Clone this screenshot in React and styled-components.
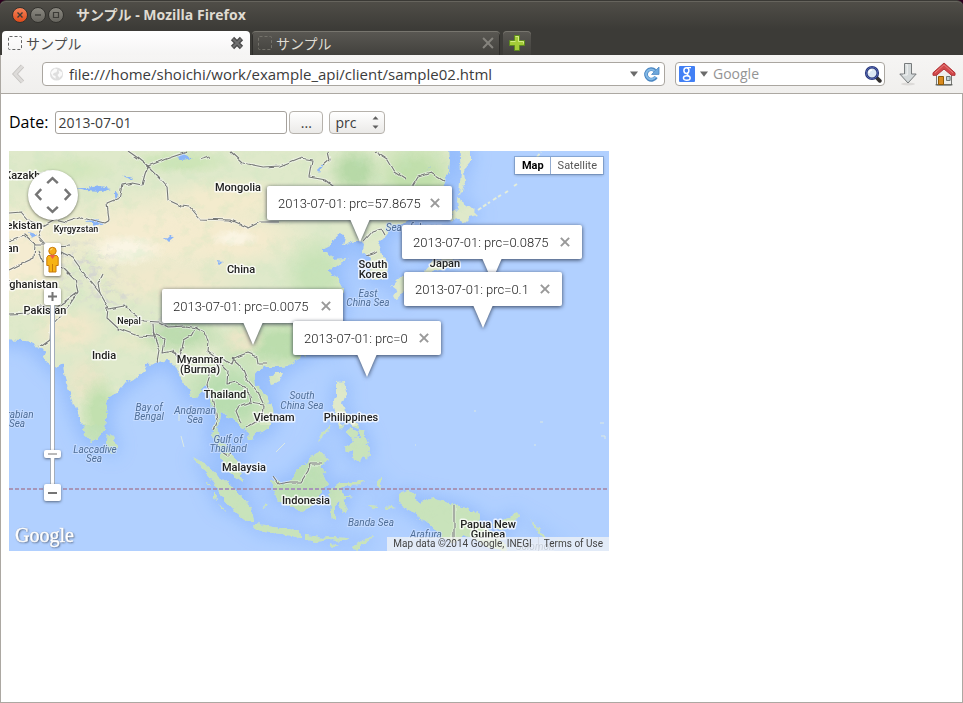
import React from "react";
import styled, { createGlobalStyle, css } from "styled-components";

const uiFont = `"Open Sans", "Noto Sans", "Noto Sans CJK JP", sans-serif`;

const GlobalStyle = createGlobalStyle`
  * { box-sizing: border-box; }
  body { margin: 0; background: #fff; font-family: ${uiFont}; color: #3c3c3c; }
  button, input, select { font: inherit; color: inherit; margin: 0; }
  svg { display: block; }
`;

const Window = styled.div`
  min-height: 100vh;
  display: flex;
  flex-direction: column;
  background: #2c001e;
`;

const Chrome = styled.header`
  background: linear-gradient(#504e48, #3c3b37 28px);
  border-top: 1px solid #3a3935;
  box-shadow: inset 0 1px #66645d;
  border-radius: 6px 6px 0 0;
`;

const TitleBar = styled.div`
  height: 30px;
  padding: 0 12px 3px;
  display: flex;
  align-items: center;
  gap: 2px;
`;

const WindowButton = styled.button`
  width: 16px;
  height: 16px;
  padding: 0;
  border: 1px solid #33322e;
  border-radius: 50%;
  background: ${(p) => (p.$close ? "linear-gradient(#f58359, #df4b1b)" : "linear-gradient(#8a8880, #66645e)")};
  svg { width: 14px; height: 14px; }
`;

const Title = styled.h1`
  margin: 0 0 0 10px;
  font-size: 14px;
  line-height: 20px;
  font-weight: 700;
  color: #dfdbd2;
  white-space: nowrap;
`;

const TabStrip = styled.div`
  display: flex;
  gap: 2px;
  padding: 0 2px;
  height: 24px;
`;

const Tab = styled.div`
  flex: 0 1 248px;
  min-width: 0;
  display: flex;
  align-items: center;
  gap: 3px;
  padding: 0 6px;
  border-radius: 4px 4px 0 0;
  font-size: 14px;
  ${(p) =>
    p.$active
      ? css`background: linear-gradient(#fff, #f5f4f3); color: #4c4c4c;`
      : css`
          background: linear-gradient(#5a5853, #42413d);
          color: #dfdbd2;
          box-shadow: inset 0 1px #77756e, inset 1px 0 #2e2d2a, inset -1px 0 #2e2d2a;
        `}
`;

const TabLabel = styled.span`
  flex: 1;
  line-height: 20px;
  font-family: "Noto Sans CJK JP", sans-serif;
`;

const PlainButton = styled.button`
  display: flex;
  align-items: center;
  justify-content: center;
  padding: 0;
  border: 0;
  background: none;
`;

const NewTab = styled(PlainButton)`
  width: 28px;
  margin-left: 1px;
  border-radius: 4px 4px 0 0;
  background: linear-gradient(#5a5853, #42413d);
  box-shadow: inset 0 1px #77756e;
`;

const Toolbar = styled.div`
  height: 39px;
  display: flex;
  align-items: center;
  padding: 0 7px 0 10px;
  background: linear-gradient(#f6f5f4, #f0efed);
  border-bottom: 1px solid #aca8a2;
  border-left: 1px solid #aca8a2;
`;

const Field = styled.div`
  height: 24px;
  display: flex;
  align-items: center;
  gap: 5px;
  padding: 0 4px 0 6px;
  background: #fff;
  border: 1px solid #aaa6a0;
  border-radius: 4px;
  min-width: 0;
`;

const AddressField = styled(Field)`
  flex: 1;
  margin: 0 10px 0 16px;
`;

const SearchField = styled(Field)`
  flex: 0 1 210px;
  padding: 0 2px 0 3px;
`;

const FieldInput = styled.input`
  flex: 1;
  min-width: 0;
  width: 0;
  padding: 0;
  border: 0;
  outline: 0;
  background: none;
  font-size: ${(p) => (p.$large ? 15 : 14)}px;
  line-height: 20px;
  &::placeholder { color: #949494; opacity: 1; }
`;

const ToolButton = styled(PlainButton)`
  width: 24px;
  height: 28px;
  margin-left: ${(p) => p.$gap || 0}px;
`;

const Page = styled.main`
  flex: 1;
  padding: 17px 8px 8px;
  border: solid #aca8a2;
  border-width: 0 1px 1px;
  background: #fff;
`;

const Form = styled.form`
  display: flex;
  align-items: center;
  margin-bottom: 17px;
  font-size: 14px;
`;

const DateLabel = styled.label`
  color: #000;
  font-size: 16px;
  line-height: 23px;
  margin-right: 7px;
`;

const DateInput = styled.input`
  flex: 0 1 232px;
  min-width: 0;
  height: 23px;
  padding: 0 2px;
  border: 1px solid #a5a19c;
  border-radius: 3px;
  font-size: 14px;
`;

const raised = css`
  height: 23px;
  border: 1px solid #b6b2ac;
  border-radius: 4px;
  background: linear-gradient(#fff, #ebeae8);
`;

const PickButton = styled.button`
  ${raised}
  width: 34px;
  margin: 0 6px 0 2px;
  padding: 0;
`;

const SelectBox = styled.div`
  display: grid;
  align-items: center;
  > * { grid-area: 1 / 1; }
  > svg { justify-self: end; margin-right: 6px; pointer-events: none; }
`;

const Select = styled.select`
  ${raised}
  appearance: none;
  width: 56px;
  padding: 0 0 0 5px;
`;

const MapFrame = styled.section`
  position: relative;
  max-width: 600px;
  height: 400px;
  overflow: hidden;
  background: #b1d0ff;
  font-family: Roboto, sans-serif;
`;

const MapPicture = styled.svg`
  width: 600px;
  height: 400px;
`;

const Place = styled.text`
  font: 500 11px/12px Roboto, sans-serif;
  font-size: ${(p) => (p.$small ? 9 : 11)}px;
  fill: #222;
  stroke: rgba(255, 255, 255, 0.75);
  stroke-width: 3px;
  stroke-linejoin: round;
  paint-order: stroke;
  text-anchor: middle;
`;

const Sea = styled.text`
  font: italic 400 10px/11px Roboto, sans-serif;
  fill: #4f6e98;
  stroke: rgba(205, 224, 255, 0.7);
  stroke-width: 2px;
  paint-order: stroke;
  text-anchor: middle;
`;

const Bubble = styled.div`
  position: absolute;
  left: ${(p) => p.$x}px;
  top: ${(p) => p.$y}px;
  width: ${(p) => p.$w}px;
  height: 34px;
  display: flex;
  align-items: center;
  justify-content: space-between;
  padding: 0 12px 0 11px;
  background: #fff;
  border-radius: 2px;
  color: #222;
  font-size: 13px;
  font-weight: 300;
  white-space: nowrap;
  filter: drop-shadow(0 1px 2px rgba(20, 30, 50, 0.8));
  &::after {
    content: "";
    position: absolute;
    top: 33px;
    left: calc(50% - 10px);
    border: solid transparent;
    border-width: 23px 10px 0;
    border-top-color: #fff;
  }
`;

const Control = styled.div`
  position: absolute;
  left: ${(p) => p.$x}px;
  top: ${(p) => p.$y}px;
`;

const controlShadow = css`
  background: #fff;
  box-shadow: 0 1px 3px rgba(0, 0, 0, 0.5);
`;

const PanPad = styled.div`
  ${controlShadow}
  width: 50px;
  height: 50px;
  padding: 3px;
  border-radius: 50%;
  display: grid;
  grid-template: repeat(3, 1fr) / repeat(3, 1fr);
`;

const PanButton = styled(PlainButton)`
  grid-area: ${(p) => p.$area};
  svg { transform: rotate(${(p) => p.$turn}deg); }
`;

const ZoomStack = styled.div`
  width: 17px;
  display: flex;
  flex-direction: column;
  align-items: center;
`;

const SmallButton = styled(PlainButton)`
  ${controlShadow}
  width: 17px;
  height: ${(p) => p.$h || 17}px;
  border-radius: 2px;
`;

const Track = styled.div`
  height: ${(p) => p.$h}px;
  width: 5px;
  background: #fff;
  border: solid #a3adbb;
  border-width: 0 1px;
`;

const TypeSwitch = styled.div`
  position: absolute;
  top: 6px;
  right: 6px;
  height: 17px;
  display: flex;
  background: #fff;
  box-shadow: 0 0 0 1px rgba(70, 105, 155, 0.35), 0 1px 3px rgba(0, 0, 0, 0.3);
`;

const TypeButton = styled.button`
  padding: 0 6px 0 7px;
  border: 0;
  background: none;
  font-size: 11px;
  line-height: 18px;
  font-weight: ${(p) => (p.$on ? 700 : 400)};
  color: ${(p) => (p.$on ? "#000" : "#565656")};
  & + & { border-left: 1px solid #93acd0; }
`;

const Brand = styled.div`
  position: absolute;
  left: 6px;
  bottom: 4px;
  font-family: "Liberation Serif", serif;
  font-size: 20px;
  line-height: 24px;
  color: #fff;
  -webkit-text-stroke: 0.5px #fff;
  text-shadow: 1px 1px 2px #45536b, 0 0 1px #56657c;
`;

const Credits = styled.footer`
  position: absolute;
  right: 0;
  bottom: 0;
  height: 14px;
  display: flex;
  background: rgba(245, 245, 245, 0.72);
  font-size: 10px;
  line-height: 14px;
  color: #444;
  span, a { padding: 0 6px; color: inherit; text-decoration: none; }
  a { border-left: 1px solid #d5dbe6; padding-left: 5px; }
`;

const Cross = ({ size = 9, color = "#999", width = 1.8 }) => (
  <svg width={size} height={size} viewBox="0 0 9 9" stroke={color} strokeWidth={width} fill="none">
    <path d="M.8.8l7.4 7.4M8.2.8L.8 8.2" />
  </svg>
);

const HeavyCross = () => (
  <svg width="14" height="14" viewBox="0 0 14 14">
    <path d="M2.5 2.5l9 9M11.5 2.5l-9 9" stroke="#4b4b4b" strokeWidth="4.6" />
    <path d="M3 3l8 8M11 3l-8 8" stroke="#707070" strokeWidth="2" />
  </svg>
);

const Favicon = ({ color }) => (
  <svg width="15" height="16" viewBox="0 0 15 16">
    <rect x=".5" y="1.5" width="13" height="13" rx="1" fill="none" stroke={color} strokeDasharray="3 2" />
  </svg>
);

const Caret = () => (
  <svg width="8" height="6" viewBox="0 0 8 6"><path d="M0 .5h8L4 5.8z" fill="#6b6b6b" /></svg>
);

const Globe = () => (
  <svg width="15" height="16" viewBox="0 0 16 16">
    <circle cx="8" cy="8" r="7" fill="#dedede" />
    <path d="M3 5l3-3 3 1-1 3-3 1-1 2 3 1v3l-3-2-2-4zM10 4l4 2v3l-3 3-2-3 2-2z" fill="#fafafa" />
  </svg>
);

const Reload = () => (
  <svg width="17" height="17" viewBox="0 0 17 17" fill="none">
    <path d="M12 4.6A5.3 5.3 0 1 0 13 11" stroke="#4a86c2" strokeWidth="3.8" />
    <path d="M16 1v7.4H8.6z" fill="#6ea8dc" stroke="#4a86c2" strokeWidth=".8" />
    <path d="M11.6 4.9a4.9 4.9 0 1 0 .8 5.7" stroke="#83b9e6" strokeWidth="2" />
  </svg>
);

const GoogleBadge = () => (
  <svg width="16" height="16" viewBox="0 0 16 16">
    <rect width="16" height="16" rx="1" fill="#4280f5" />
    <g fill="none" stroke="#fff">
      <ellipse cx="7.4" cy="4.6" rx="2.5" ry="2.9" strokeWidth="1.5" />
      <path d="M8 1.7h4M9 7.3c-1.6 1.2-.4 1.5 1 2.3" strokeWidth="1.3" />
      <ellipse cx="7.8" cy="12" rx="3.4" ry="2.3" strokeWidth="1.4" />
    </g>
  </svg>
);

const Magnifier = () => (
  <svg width="18" height="18" viewBox="0 0 18 18">
    <path d="M12.5 12.5l3.3 3.3" stroke="#302e2e" strokeWidth="3.8" strokeLinecap="round" />
    <circle cx="8" cy="8" r="5.8" fill="#dce8f4" stroke="#263577" strokeWidth="2.6" />
    <circle cx="8" cy="8" r="5.8" fill="none" stroke="#6376c4" strokeWidth=".7" />
    <path d="M5 8a3 3 0 0 1 3-3" stroke="#fff" strokeWidth="1.6" fill="none" />
  </svg>
);

const Download = () => (
  <svg width="20" height="24" viewBox="0 0 20 24">
    <ellipse cx="10" cy="22" rx="7" ry="1.5" fill="#dcdad8" />
    <path d="M6.5 1.5h7V12h4.7L10 21 1.8 12h4.7z" fill="#d4d9da" stroke="#777b7c" strokeLinejoin="round" />
    <path d="M7.7 2.7h1.5V13H5" stroke="#f3f5f5" fill="none" />
  </svg>
);

const Home = () => (
  <svg width="24" height="24" viewBox="0 0 24 24">
    <path d="M4.5 11L12 4l7.5 7v12h-15z" fill="#eeeeec" stroke="#777974" />
    <path d="M3.5 22.8h17" stroke="#555753" />
    <path d="M6.5 14.5h5v8h-5z" fill="#d98a1d" stroke="#8f5902" />
    <path d="M14.5 14.5h3.6v4h-3.6z" fill="#c0d0d2" stroke="#6b7779" />
    <path d="M12 1L1 10.8v2.5h3.5L12 7l7.5 6.3H23v-2.5z" fill="#d2484a" stroke="#b03337" strokeLinejoin="round" />
    <path d="M3 10.8l9-8 9 8" fill="none" stroke="#e57e7c" />
  </svg>
);

const Chevron = () => (
  <svg width="13" height="9" viewBox="0 0 13 9">
    <path d="M1.2 7.2l5.3-5 5.3 5" fill="none" stroke="#757575" strokeWidth="2.5" />
  </svg>
);

const Pegman = () => (
  <svg width="13" height="28" viewBox="0 0 13 28">
    <path d="M2.2 9.5h8.6l1.4 2v8H10V26H3v-6.5H.8v-8z" fill="#f7b314" stroke="#c87a0a" />
    <path d="M6.5 18v8" stroke="#c87a0a" />
    <path d="M3.5 9h6l-3 4z" fill="#ee5d4c" />
    <circle cx="6.5" cy="5" r="3.7" fill="#f7ae17" stroke="#c87a0a" />
    <path d="M4.5 4.3a2 2 0 0 1 2-1.6" stroke="#ffe39b" fill="none" />
  </svg>
);

const MAINLAND =
  "M0 140H448L450 160 449 172 443 186 434 201 420 214 408 220 398 225 391 230 385 237 378 244 380 251 387 262 388 272 382 279 372 279 369 270 371 258 363 252 364 244 360 240 352 242 343 246 345 236 338 235 330 245 322 249 322 252 328 252 333 260 348 259 338 264 328 272 337 278 343 288 342 304 338 320 329 338 321 348 308 354 297 360 287 366 280 367 268 367 258 370 253 376 255 385 265 393 272 408 273 418 270 427 262 432 255 433 249 440 248 431 242 428 237 422 231 418 222 413 220 421 217 428 219 438 228 448 232 454 238 462 240 471 243 482 235 476 228 470 222 460 221 453 216 446 212 436 214 427 216 418 213 408 209 396 207 383 203 389 197 397 190 397 188 388 180 376 175 366 168 360 159 363 147 364 144 371 136 378 125 383 117 393 108 397 106 414 105 429 97 439 91 442 86 436 79 418 71 396 65 380 63 364 56 368 48 363 43 357 46 350 36 348 32 342 25 341 0 340Z";

const ISLANDS = [
  "M459 140L471 152 471 162 464 170 465 182 462 192 459 193 461 172 460 158Z",
  "M457 198L467 205 473 210 478 215 470 217 464 223 456 218 451 223 453 213 458 208Z",
  "M449 226L458 230 459 243 452 258 451 268 443 269 435 271 427 275 424 271 431 263 441 259 448 246Z",
  "M415 274L423 272 422 278 415 280Z",
  "M396 281L404 274 407 281 403 293 397 300 394 295 397 290 392 286Z",
  "M333 339L338 342 336 356 331 350Z",
  "M269 377L276 373 283 373 279 382 272 384Z",
  "M107 433L114 437 117 446 114 453 109 454 106 446Z",
  "M336 382L345 381 347 392 343 402 345 413 354 420 360 428 354 426 344 418 336 415 333 403 336 396Z",
  "M338 420L344 425 341 429ZM349 427L358 432 354 440 348 433ZM359 428L364 431 366 442 360 438ZM352 441L357 437 360 442 354 445ZM331 425L326 434 318 441 321 435Z",
  "M345 448L352 444 356 440 365 437 370 448 368 459 363 456 360 462 354 459 352 450 346 453Z",
  "M193 457L205 464 215 474 224 480 235 490 242 497 251 508 253 522 247 522 237 514 224 500 214 482 204 471Z",
  "M253 524L265 525 278 528 290 528 301 533 301 538 282 534 265 532 255 529Z",
  "M305 535L313 536 323 538 330 537 348 538 347 541 328 540 315 542 305 539Z",
  "M330 543L339 546 332 546ZM353 546L365 539 374 537 362 545 356 550Z",
  "M271 479L282 484 292 480 297 469 307 463 314 453 320 451 329 460 321 465 323 472 328 484 321 491 316 501 309 509 298 511 289 506 278 501 274 491Z",
  "M330 490L340 482 357 482 364 479 360 485 345 486 339 490 346 496 352 497 342 500 347 510 342 513 338 502 335 505 335 521 330 517 331 505Z",
  "M377 479L383 477 380 488 377 486ZM368 505L378 506 373 508ZM384 506L395 508 386 509Z",
  "M399 494L408 491 415 494 414 499 420 502 428 498 443 501 455 505 466 508 479 514 480 523 489 530 501 539 508 551 488 547 475 539 463 535 454 543 441 538 434 529 422 520 411 511 403 507 399 501Z",
  "M491 525L503 521 515 513 519 516 512 525 501 529ZM531 520L537 526 542 533 548 540 541 536ZM556 539L565 543 558 542Z",
  "M207 481L210 485 207 483ZM213 493L217 500 213 498ZM219 504L225 511 221 509ZM263 503L267 505 264 507Z",
];

const BORDERS = [
  "M128 151L138 158 148 166 145 174 142 185 132 183 122 185 119 198 107 203 109 220 104 223 82 217 67 222 55 219 43 226 38 236 46 245 58 247 70 246",
  "M148 166L160 178 167 186 168 200 181 206 190 207 200 219 230 220 248 228 260 222 279 222",
  "M148 166L166 159 187 152M200 160L210 157",
  "M230 151L243 163 263 167 280 166 300 158 312 160 309 177 326 180 340 190M359 206L382 203 408 194 418 177 431 173 444 181M328 152L330 160 324 165",
  "M374 151L388 160 395 172 406 179",
  "M9 213L22 212 30 221 41 225M9 241L25 235 35 244 34 258 21 264 9 270M34 244L49 244 57 250 73 258 86 276 100 293 109 309 125 306 132 313 144 321 158 322 168 327 185 326 196 328",
  "M9 314L29 313 42 306 53 309 67 300 78 292 75 280 62 267 52 264M78 292L70 304 61 315 51 326 50 340 39 348M100 293L98 284 103 274M38 250L42 262 55 259",
  "M108 308L107 318 119 329 138 336 154 337 153 325",
  "M153 331L160 350 158 362M154 334L165 339 163 352 174 350 180 365",
  "M196 327L191 336 184 340 180 356 172 352M196 327L205 332 208 341 207 351 216 358 220 365 210 374 207 385 212 397 215 410 217 420 213 430",
  "M220 365L224 358 232 364 234 358 247 353 257 357 258 363 268 363M232 358L241 366 246 378 257 391 263 403",
  "M226 384L237 382 248 389 250 403 239 407 236 412 241 424 M250 403L263 405 262 418 246 428M226 384L227 370 222 365",
  "M363 241L372 231 381 228 385 235M366 256L378 252",
  "M273 477L278 484 291 482 301 482 308 471 310 464 321 464",
  "M222 452L228 456 232 452",
  "M454 504V543",
];

const places = [
  ["Mongolia", 238, 191], ["China", 241, 273], ["India", 104, 359],
  ["South", 373, 268], ["Korea", 373, 278], ["Japan", 445, 267],
  ["Myanmar", 200, 363], ["(Burma)", 200, 373], ["Thailand", 225, 398],
  ["Vietnam", 274, 421], ["Philippines", 351, 421], ["Malaysia", 244, 471],
  ["Indonesia", 306, 504], ["Papua New", 488, 528], ["Guinea", 488, 538],
  ["Pakistan", 45, 314], ["Kazakhstan", 33, 179], ["Uzbekistan", 15, 229],
  ["Tajikistan", -5, 252], ["Afghanistan", 28, 288],
  ["Kyrgyzstan", 76, 232, true], ["Nepal", 129, 324, true],
];

const seas = [
  ["East", 368, 297], ["China Sea", 368, 306], ["Sea of Japan", 414, 231],
  ["South", 302, 399], ["China Sea", 302, 409], ["Gulf of", 228, 443],
  ["Thailand", 228, 452], ["Bay of", 149, 411], ["Bengal", 149, 420],
  ["Andaman", 195, 414], ["Sea", 195, 423], ["Arabian", 17, 418],
  ["Sea", 17, 427], ["Laccadive", 95, 453], ["Sea", 94, 462],
  ["Banda Sea", 371, 526], ["Arafura", 426, 538], ["Solomon", 535, 550],
];

const tints = [
  ["#f5ecd0", 150, 235, 120, 48], ["#f4ebce", 232, 238, 85, 34],
  ["#f5ecd1", 20, 255, 62, 66], ["#f3ebcd", 225, 200, 80, 24], ["#f0e9cc", 165, 282, 90, 26],
  ["#faf5e4", 125, 250, 42, 17], ["#faf4e2", 235, 238, 26, 10],
  ["#f1e8ca", 70, 330, 40, 26], ["#e9e6c8", 85, 380, 24, 28], ["#e6e9c9", 130, 342, 30, 14],
  ["#cde5b7", 180, 162, 55, 13], ["#d5e7be", 70, 170, 50, 16],
  ["#c2e0af", 100, 412, 22, 38], ["#c1dfac", 415, 178, 45, 42], ["#b7d9a7", 355, 171, 28, 26],
  ["#c9e3b8", 317, 275, 38, 44], ["#bcddad", 285, 345, 75, 28], ["#b9ddb0", 228, 398, 55, 48],
  ["#bddcaf", 180, 335, 48, 20], ["#ece6c8", 243, 340, 24, 16], ["#b5dab0", 300, 485, 42, 38],
];

const bubbles = [
  ["57.8675", 258, 35, 185], ["0.0875", 393, 74, 180], ["0.0075", 153, 138, 181],
  ["0.1", 395, 121, 158], ["0", 284, 170, 148],
];

function MapArt() {
  return (
    <MapPicture viewBox="9 151 600 400" role="img" aria-label="Map of Asia">
      <defs>
        <filter id="coast" x="-5%" y="-5%" width="110%" height="110%">
          <feTurbulence type="fractalNoise" baseFrequency=".16" numOctaves="3" seed="7" />
          <feDisplacementMap in="SourceGraphic" scale="6" xChannelSelector="R" yChannelSelector="G" />
        </filter>
        <filter id="frontier" x="-5%" y="-5%" width="110%" height="110%">
          <feTurbulence type="fractalNoise" baseFrequency=".09" numOctaves="2" seed="5" />
          <feDisplacementMap in="SourceGraphic" scale="5" xChannelSelector="R" yChannelSelector="G" />
        </filter>
        <filter id="soft"><feGaussianBlur stdDeviation="9" /></filter>
        <filter id="relief" x="0" y="0" width="100%" height="100%">
          <feTurbulence type="fractalNoise" baseFrequency=".06 .08" numOctaves="5" seed="14" />
          <feColorMatrix values="0 0 0 0 .58  0 0 0 0 .79  0 0 0 0 .52  3 0 0 0 -1.5" />
        </filter>
        <filter id="ridges" x="0" y="0" width="100%" height="100%">
          <feTurbulence type="fractalNoise" baseFrequency=".09 .15" numOctaves="4" seed="3" />
          <feColorMatrix values="0 0 0 0 .66  0 0 0 0 .67  0 0 0 0 .63  0 4 0 0 -2" />
        </filter>
        <radialGradient id="tint"><stop offset=".3" stopColor="#fff" /><stop offset="1" stopColor="#fff" stopOpacity="0" /></radialGradient>
        {tints.map(([color], i) => (
          <radialGradient id={`tint${i}`} key={i}>
            <stop offset=".35" stopColor={color} /><stop offset="1" stopColor={color} stopOpacity="0" />
          </radialGradient>
        ))}
        <clipPath id="land">
          <path d={MAINLAND} />
          {ISLANDS.map((d) => <path key={d} d={d} />)}
        </clipPath>
        <mask id="mountains">
          <ellipse cx="82" cy="268" rx="44" ry="36" fill="url(#tint)" />
          <ellipse cx="110" cy="295" rx="36" ry="20" fill="url(#tint)" />
          <ellipse cx="180" cy="320" rx="60" ry="14" fill="url(#tint)" />
        </mask>
      </defs>
      <rect x="9" y="151" width="600" height="400" fill="#b1d0ff" />
      <g filter="url(#soft)" fill="#8db7fb" stroke="#8db7fb" strokeWidth="12" opacity=".8">
        <path d={MAINLAND} />
        {ISLANDS.map((d) => <path key={d} d={d} strokeWidth="5" />)}
      </g>
      <g filter="url(#coast)">
        <g clipPath="url(#land)">
          <rect x="0" y="140" width="620" height="420" fill="#dfe9ca" />
          {tints.map(([, cx, cy, rx, ry], i) => (
            <ellipse key={i} cx={cx} cy={cy} rx={rx} ry={ry} fill={`url(#tint${i})`} />
          ))}
          <rect x="0" y="425" width="620" height="135" fill="#bfe0b5" opacity=".7" />
          <rect x="0" y="140" width="620" height="420" filter="url(#relief)" opacity=".3" />
          <g mask="url(#mountains)"><rect x="0" y="220" width="320" height="130" filter="url(#ridges)" /></g>
        </g>
        <g fill="#8ab4f8">
          <path d="M74 188L86 188 100 186 111 188 101 191 86 190ZM176 156L184 154 191 158 182 160ZM123 175L133 178 131 180ZM115 190L119 196 115 199ZM85 221L96 219 103 223 95 226ZM164 237L174 238 169 242ZM318 169L323 163 320 172ZM28 232L38 235 32 237ZM217 261L224 262 220 264ZM431 165L427 172 430 166Z" />
        </g>
      </g>
      <g fill="none" strokeLinejoin="round" filter="url(#frontier)">
        {BORDERS.map((d) => <path key={d} d={d} stroke="#f7f8f7" strokeWidth="3" opacity=".6" />)}
        {BORDERS.map((d) => <path key={d} d={d} stroke="#767876" strokeWidth="1.1" />)}
      </g>
      <path d="M478 210L490 202M493 200L501 195M505 193L508 191M514 186L517 184M537 157L541 152" stroke="#e4edda" strokeWidth="2" strokeDasharray="4 2" />
      <path d="M179 412V421M181 436L184 447M276 452L285 443M540 422h3M600 423h4M601 436h4v3M534 445h2M474 411h2M415 445h1" stroke="#dce9e2" strokeWidth="1" fill="none" />
      <path d="M9 489H609" stroke="#a796b8" strokeWidth="2" strokeDasharray="4 2" />
      {seas.map(([name, x, y]) => <Sea key={`${name}${x}${y}`} x={x} y={y}>{name}</Sea>)}
      {places.map(([name, x, y, small]) => <Place key={name} x={x} y={y} $small={small}>{name}</Place>)}
    </MapPicture>
  );
}

export default function App() {
  return (
    <Window>
      <GlobalStyle />
      <Chrome>
        <TitleBar>
          <WindowButton $close aria-label="Close window">
            <svg viewBox="0 0 14 14"><path d="M4.5 4.5l5 5M9.5 4.5l-5 5" stroke="#3c3b37" strokeWidth="1.4" /></svg>
          </WindowButton>
          <WindowButton aria-label="Minimize">
            <svg viewBox="0 0 14 14"><path d="M4 7h6" stroke="#3c3b37" strokeWidth="1.4" /></svg>
          </WindowButton>
          <WindowButton aria-label="Maximize">
            <svg viewBox="0 0 14 14"><path d="M4.5 4.5h5v5h-5z" fill="none" stroke="#3c3b37" strokeWidth="1.2" /></svg>
          </WindowButton>
          <Title>サンプル - Mozilla Firefox</Title>
        </TitleBar>
        <TabStrip>
          <Tab $active>
            <Favicon color="#666" />
            <TabLabel>サンプル</TabLabel>
            <PlainButton aria-label="Close tab"><HeavyCross /></PlainButton>
          </Tab>
          <Tab>
            <Favicon color="#74726b" />
            <TabLabel>サンプル</TabLabel>
            <PlainButton aria-label="Close tab"><Cross size={12} color="#85837d" width={1.5} /></PlainButton>
          </Tab>
          <NewTab aria-label="New tab">
            <svg width="16" height="16" viewBox="0 0 16 16">
              <path d="M5.5.5h5v5h5v5h-5v5h-5v-5h-5v-5h5z" fill="#a4cb38" stroke="#5d8a1d" />
              <path d="M6.5 1.5h3v5h5v2M1.5 6.5h5" fill="none" stroke="#d5ec86" />
            </svg>
          </NewTab>
        </TabStrip>
      </Chrome>
      <Toolbar>
        <PlainButton aria-label="Back">
          <svg width="15" height="20" viewBox="0 0 15 20">
            <path d="M11.5 2L4 10l7.5 8" fill="none" stroke="#c3c1be" strokeWidth="4.4" />
            <path d="M11.5 2L4 10l7.5 8" fill="none" stroke="#dddbd9" strokeWidth="2.8" />
          </svg>
        </PlainButton>
        <AddressField>
          <Globe />
          <FieldInput $large aria-label="Address" defaultValue="file:///home/shoichi/work/example_api/client/sample02.html" />
          <PlainButton aria-label="History"><Caret /></PlainButton>
          <PlainButton aria-label="Reload"><Reload /></PlainButton>
        </AddressField>
        <SearchField>
          <GoogleBadge />
          <PlainButton aria-label="Search engine"><Caret /></PlainButton>
          <FieldInput aria-label="Search" placeholder="Google" />
          <PlainButton aria-label="Search"><Magnifier /></PlainButton>
        </SearchField>
        <ToolButton aria-label="Downloads" $gap={11}><Download /></ToolButton>
        <ToolButton aria-label="Home" $gap={12}><Home /></ToolButton>
      </Toolbar>
      <Page>
        <Form onSubmit={(e) => e.preventDefault()}>
          <DateLabel htmlFor="date">Date:</DateLabel>
          <DateInput id="date" defaultValue="2013-07-01" />
          <PickButton type="button" aria-label="Pick a date">...</PickButton>
          <SelectBox>
            <Select aria-label="Value" defaultValue="prc"><option>prc</option></Select>
            <svg width="7" height="13" viewBox="0 0 7 13"><path d="M.5 3.5h6l-3-3.3zM.5 9.5h6l-3 3.3z" fill="#5f5f5f" /></svg>
          </SelectBox>
        </Form>
        <MapFrame>
          <MapArt />
          <Control $x={19} $y={19}>
            <PanPad>
              <PanButton $area="1 / 2" $turn={0} aria-label="Pan up"><Chevron /></PanButton>
              <PanButton $area="2 / 1" $turn={-90} aria-label="Pan left"><Chevron /></PanButton>
              <PanButton $area="2 / 3" $turn={90} aria-label="Pan right"><Chevron /></PanButton>
              <PanButton $area="3 / 2" $turn={180} aria-label="Pan down"><Chevron /></PanButton>
            </PanPad>
          </Control>
          <Control $x={35} $y={92}>
            <SmallButton $h={33} aria-label="Street View"><Pegman /></SmallButton>
          </Control>
          <Control $x={35} $y={137}>
            <ZoomStack>
              <SmallButton aria-label="Zoom in">
                <svg width="9" height="9" viewBox="0 0 9 9"><path d="M0 4.5h9M4.5 0v9" stroke="#757575" strokeWidth="2" /></svg>
              </SmallButton>
              <Track $h={145} />
              <SmallButton $h={8} aria-label="Zoom level">
                <svg width="9" height="2" viewBox="0 0 9 2"><path d="M0 1h9" stroke="#757575" /></svg>
              </SmallButton>
              <Track $h={26} />
              <SmallButton aria-label="Zoom out">
                <svg width="9" height="2" viewBox="0 0 9 2"><path d="M0 1h9" stroke="#757575" strokeWidth="2" /></svg>
              </SmallButton>
            </ZoomStack>
          </Control>
          {bubbles.map(([value, x, y, w]) => (
            <Bubble key={value} $x={x} $y={y} $w={w}>
              <span>2013-07-01: prc={value}</span>
              <PlainButton aria-label="Close"><Cross size={10} /></PlainButton>
            </Bubble>
          ))}
          <TypeSwitch>
            <TypeButton $on>Map</TypeButton>
            <TypeButton>Satellite</TypeButton>
          </TypeSwitch>
          <Brand>Google</Brand>
          <Credits>
            <span>Map data ©2014 Google, INEGI</span>
            <a href="#terms">Terms of Use</a>
          </Credits>
        </MapFrame>
      </Page>
    </Window>
  );
}
